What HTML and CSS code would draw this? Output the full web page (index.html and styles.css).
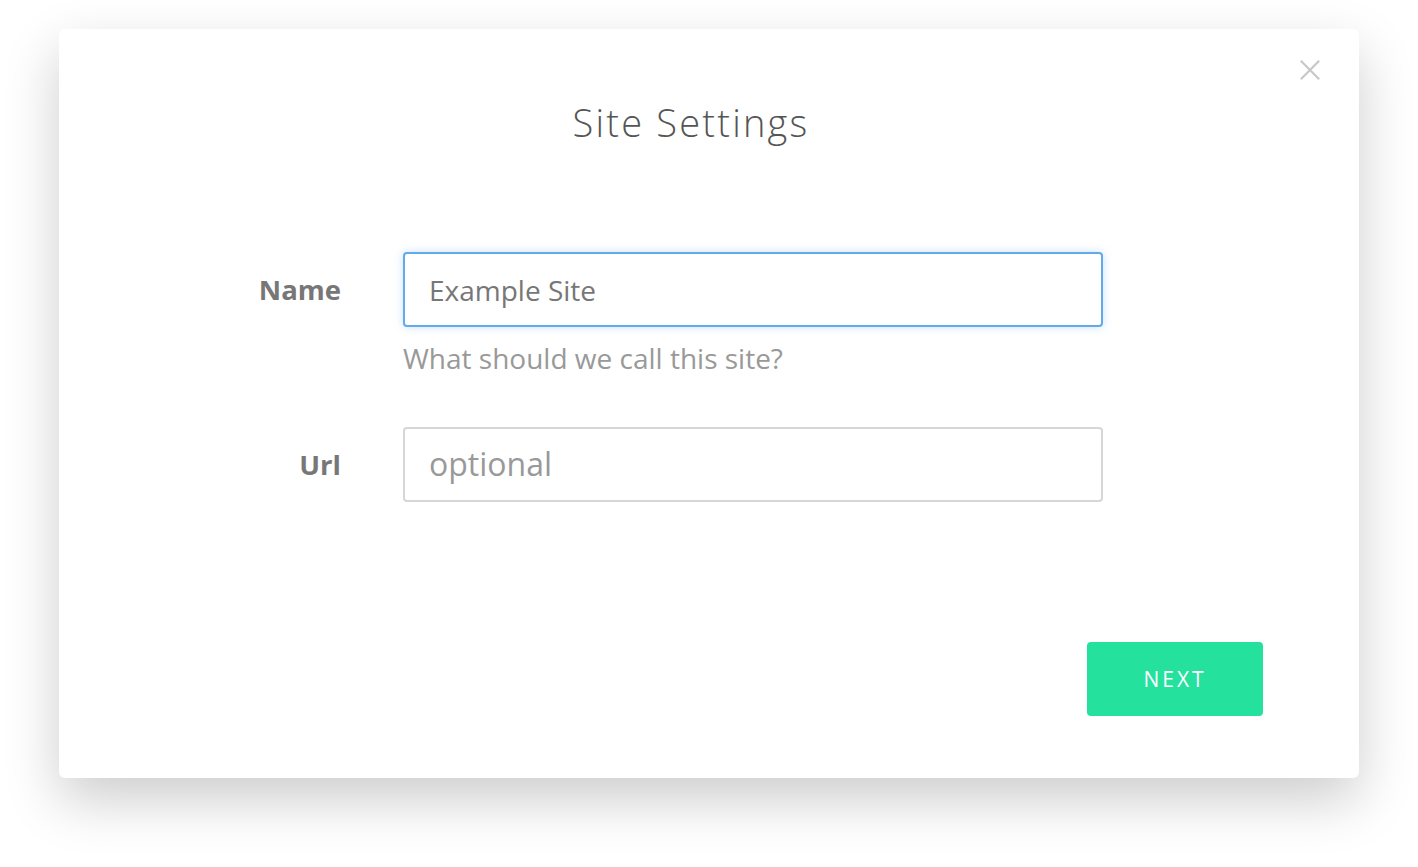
FILE: index.html
```html
<!DOCTYPE html>
<html lang="en">
<head>
    <meta charset="UTF-8">
    <title>Site Settings</title>
    <link rel="stylesheet" href="styles.css">
</head>
<body>
    <div class="modal">
        <button class="close-btn" aria-label="Close">
            <svg width="24" height="24" viewBox="0 0 24 24">
                <path d="M2 2 L22 22 M22 2 L2 22" stroke="#c8c8c8" stroke-width="2.4" fill="none"/>
            </svg>
        </button>
        <h1 class="modal-title">Site Settings</h1>

        <div class="form">
            <label class="form-label" for="name">Name</label>
            <div class="form-field">
                <input type="text" id="name" class="form-input focused" value="Example Site">
                <p class="form-help">What should we call this site?</p>
            </div>

            <label class="form-label" for="url">Url</label>
            <div class="form-field">
                <input type="text" id="url" class="form-input" placeholder="optional">
            </div>
        </div>

        <div class="modal-footer">
            <button class="next-btn">NEXT</button>
        </div>
    </div>
</body>
</html>
```

FILE: styles.css
```css
html {
    background: #fff;
}
body {
    margin: 0;
    padding: 29px 59px;
    min-height: 100vh;
    box-sizing: border-box;
    background: #fff;
    font-family: "Open Sans", Arial, sans-serif;
}
.modal {
    position: relative;
    width: 1300px;
    height: 749px;
    box-sizing: border-box;
    background: #fff;
    border-radius: 6px;
    box-shadow: 0 22px 55px rgba(0, 0, 0, 0.2);
    display: flex;
    flex-direction: column;
}
.close-btn {
    position: absolute;
    top: 30px;
    right: 38px;
    padding: 0;
    border: none;
    background: none;
    cursor: pointer;
}
.close-btn svg {
    display: block;
    width: 22px;
    height: 22px;
}
.modal-title {
    margin: 67px 0 0;
    padding-right: 36px;
    font-size: 38px;
    font-weight: 300;
    line-height: 52px;
    letter-spacing: 2.2px;
    color: #555;
    text-align: center;
}
.form {
    display: grid;
    grid-template-columns: 282px 700px;
    column-gap: 62px;
    row-gap: 50px;
    margin-top: 104px;
}
.form-label {
    text-align: right;
    font-size: 27.5px;
    font-weight: 700;
    line-height: 75px;
    color: #777;
}
.form-input {
    display: block;
    width: 700px;
    height: 75px;
    box-sizing: border-box;
    padding: 0 24px;
    border: 2px solid #d6d6d6;
    border-radius: 4px;
    font-family: "Open Sans", Arial, sans-serif;
    font-size: 28px;
    color: #777;
    outline: none;
}
.form-input::placeholder {
    color: #999;
    font-size: 32px;
}
.form-input.focused {
    border-color: #62aaea;
    box-shadow: 0 0 8px rgba(98, 170, 234, 0.35);
}
.form-help {
    margin: 12px 0 0;
    font-size: 28px;
    line-height: 38px;
    color: #999;
}
.modal-footer {
    margin-top: auto;
    padding: 0 96px 62px 0;
    display: flex;
    justify-content: flex-end;
}
.next-btn {
    width: 176px;
    height: 74px;
    border: none;
    border-radius: 4px;
    background: #24e19e;
    color: #fff;
    font-family: "Open Sans", Arial, sans-serif;
    font-size: 21px;
    font-weight: 500;
    letter-spacing: 3px;
    cursor: pointer;
}
```
